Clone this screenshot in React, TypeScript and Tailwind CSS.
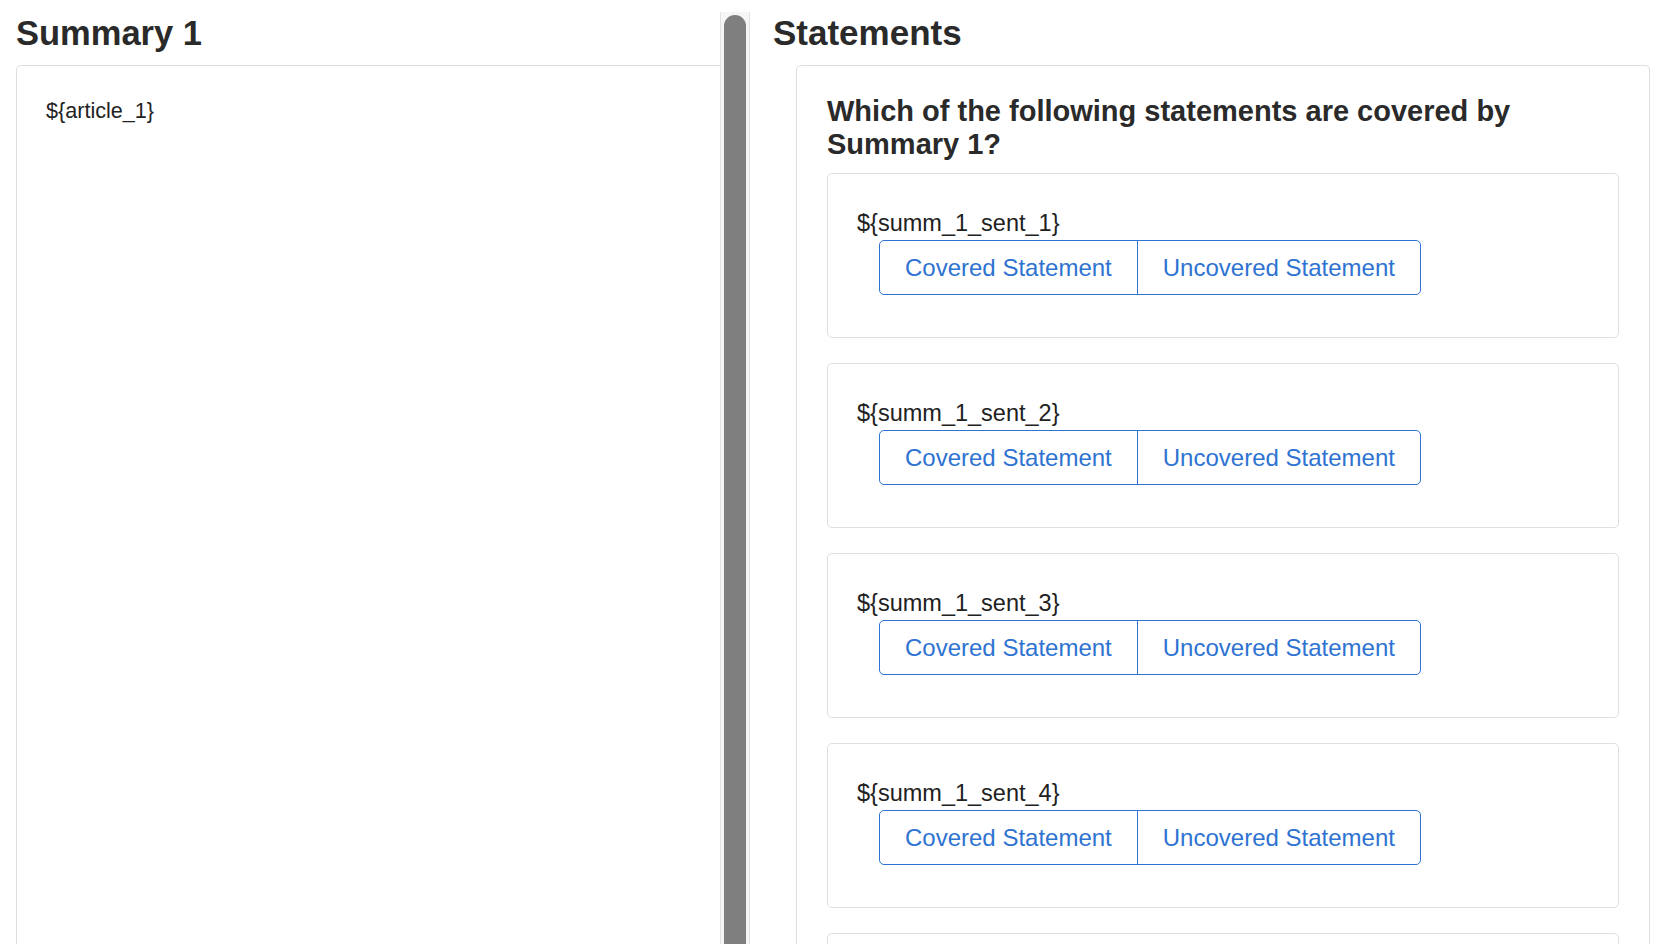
import React from "react";

const sentences = [
  "${summ_1_sent_1}",
  "${summ_1_sent_2}",
  "${summ_1_sent_3}",
  "${summ_1_sent_4}",
];

function StatementCard({ text }: { text: string }) {
  return (
    <div className="shrink-0 rounded-[5px] border border-[#dfdfdf] bg-white pt-[33px] px-[29px] pb-[42px]">
      <div className="text-[23.5px] leading-[33px] text-[#212121]">{text}</div>
      <div className="ml-[22px] inline-flex h-[55px] rounded-[5px] border border-[#2e73d1] text-[24px] leading-[36px] text-[#2e73d1]">
        <button className="flex items-center border-r border-[#2e73d1] px-[25px]">
          Covered Statement
        </button>
        <button className="flex items-center px-[25px]">Uncovered Statement</button>
      </div>
    </div>
  );
}

export default function App() {
  return (
    <div
      className="flex h-[944px] w-full overflow-hidden bg-white text-[#222]"
      style={{ fontFamily: '"Liberation Sans", Arial, Helvetica, sans-serif' }}
    >
      {/* Left column */}
      <div className="flex w-[750px] shrink-0 pt-[12px]">
        <div className="flex flex-1 flex-col pl-[16px]">
          <h1 className="mb-[11px] text-[34.5px] font-bold leading-[42px] text-[#2a2a2a]">
            Summary 1
          </h1>
          <div className="flex-1 rounded-tl-[5px] border-l border-t border-[#dedede] p-[29px]">
            <div className="text-[21.6px] leading-[31px] text-[#222]">{"${article_1}"}</div>
          </div>
        </div>
        {/* scrollbar */}
        <div className="flex w-[30px] shrink-0 justify-center border-x border-[#e2e2e2] bg-[#f6f6f6] pt-[3px]">
          <div className="h-[1000px] w-[22px] rounded-t-full bg-[#7f7f7f]" />
        </div>
      </div>

      {/* Right column */}
      <div className="flex flex-1 flex-col pl-[23px] pr-[18px] pt-[12px]">
        <h2 className="mb-[11px] text-[35px] font-bold leading-[42px] text-[#2a2a2a]">
          Statements
        </h2>
        <div className="ml-[23px] flex flex-1 flex-col overflow-hidden rounded-t-[5px] border-x border-t border-[#dedede] px-[30px] pt-[29px]">
          <h3 className="mb-[12px] text-[29px] font-bold leading-[33px] text-[#2a2a2a]">
            Which of the following statements are covered by Summary 1?
          </h3>
          <div className="flex flex-col gap-[25px]">
            {sentences.map((s) => (
              <StatementCard key={s} text={s} />
            ))}
            <div className="h-[165px] shrink-0 rounded-[5px] border border-[#dfdfdf] bg-white" />
          </div>
        </div>
      </div>
    </div>
  );
}
